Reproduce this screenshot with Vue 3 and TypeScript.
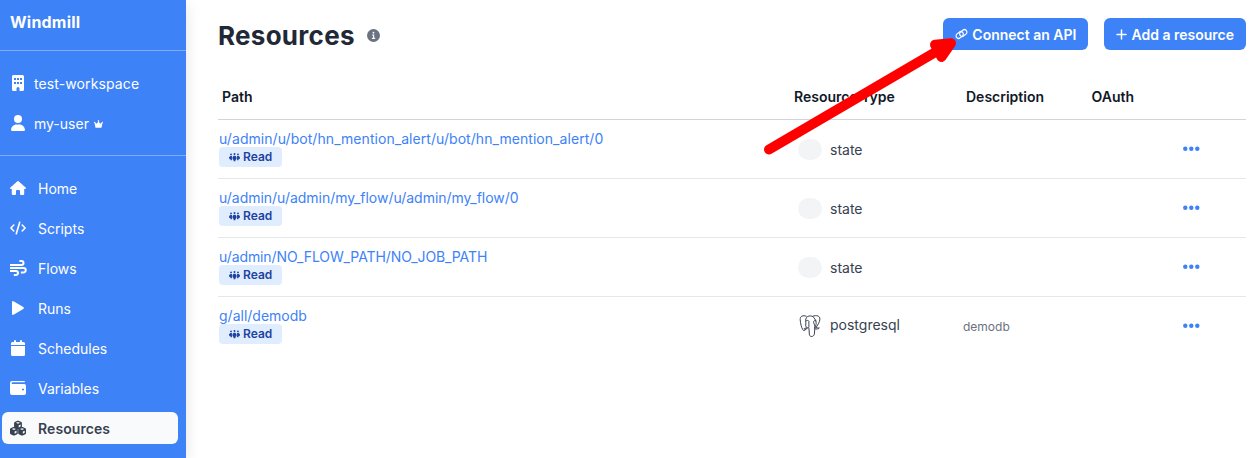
<script setup lang="ts">
interface NavItem {
  label: string
  icon: string
  active?: boolean
}

interface Resource {
  path: string
  type: string
  description: string
  tracking: number
}

const navItems: NavItem[] = [
  { label: 'Home', icon: 'home' },
  { label: 'Scripts', icon: 'code' },
  { label: 'Flows', icon: 'wind' },
  { label: 'Runs', icon: 'play' },
  { label: 'Schedules', icon: 'calendar' },
  { label: 'Variables', icon: 'wallet' },
  { label: 'Resources', icon: 'cubes', active: true },
]

const resources: Resource[] = [
  { path: 'u/admin/u/bot/hn_mention_alert/u/bot/hn_mention_alert/0', type: 'state', description: '', tracking: 0.055 },
  { path: 'u/admin/u/admin/my_flow/u/admin/my_flow/0', type: 'state', description: '', tracking: -0.02 },
  { path: 'u/admin/NO_FLOW_PATH/NO_JOB_PATH', type: 'state', description: '', tracking: -0.1 },
  { path: 'g/all/demodb', type: 'postgresql', description: 'demodb', tracking: 0 },
]
</script>

<template>
  <div class="app">
    <aside class="sidebar">
      <div class="brand">Windmill</div>
      <div class="account">
        <div class="account-row">
          <svg class="icon" viewBox="0 0 16 16">
            <path fill="currentColor" fill-rule="evenodd" d="M3.5 0h9A1.5 1.5 0 0 1 14 1.5v13a1.5 1.5 0 0 1-1.500 1.500H9.500v-2.500a1.500 1.500 0 0 0-3 0V16h-3A1.500 1.500 0 0 1 2 14.500v-13A1.500 1.500 0 0 1 3.500 0zM4 3v2h2V3zm3 0v2h2V3zm3 0v2h2V3zM4 7v2h2V7zm3 0v2h2V7zm3 0v2h2V7z" />
          </svg>
          <span class="workspace">test-workspace</span>
        </div>
        <div class="account-row">
          <svg class="icon" viewBox="-32 0 512 512">
            <path fill="currentColor" d="M224 256A128 128 0 1 0 224 0a128 128 0 1 0 0 256zm-45.700 48C79.800 304 0 383.800 0 482.300C0 498.700 13.300 512 29.700 512H418.300c16.400 0 29.700-13.300 29.700-29.700C448 383.800 368.200 304 269.700 304H178.300z" />
          </svg>
          <span class="user">my-user</span>
          <svg class="crown" viewBox="0 0 10 9">
            <path fill="currentColor" d="M1.600 8.300.5 3.300a.7.700 0 1 1 .8-.5l1.900 1.300L4.600 1.700a.8.800 0 1 1 .8 0l1.400 2.400 1.900-1.300a.7.700 0 1 1 .8.500l-1.100 5q-.1.500-.6.500H2.200q-.5 0-.6-.5z" />
          </svg>
        </div>
      </div>
      <nav class="nav">
        <a v-for="item in navItems" :key="item.label" class="nav-item" :class="{ active: item.active }">
          <svg class="icon" viewBox="0 0 16 16">
            <path v-if="item.icon === 'home'" fill="currentColor" d="M7.400 1.300a.95.950 0 0 1 1.200 0l7 6.200c.7.600.3 1.400-.5 1.400h-.9V14a1 1 0 0 1-1 1H11a1 1 0 0 1-1-1v-3a1 1 0 0 0-1-1H7a1 1 0 0 0-1 1v3a1 1 0 0 1-1 1H2.800a1 1 0 0 1-1-1V8.900H.9C.1 8.900-.3 8.100.4 7.500z" />
            <path v-else-if="item.icon === 'code'" fill="none" stroke="currentColor" stroke-width="1.600" stroke-linecap="round" stroke-linejoin="round" d="M3.800 5 .9 8l2.900 3M12.200 5l2.900 3-2.900 3M9.700 2.300 6.300 13.700" />
            <path v-else-if="item.icon === 'wind'" fill="none" stroke="currentColor" stroke-width="2" stroke-linecap="square" d="M1 5h10.500a2 2 0 1 0 0-4H10.400M1 8h12.500a1.700 1.700 0 1 1 0 4.500H11.800M1 11h5a1.950 1.950 0 1 1 0 4H4.800" />
            <path v-else-if="item.icon === 'play'" fill="currentColor" d="M3.500 1.200 13.300 7a1.150 1.150 0 0 1 0 2l-9.800 5.800A1 1 0 0 1 2 13.900V2.100a1 1 0 0 1 1.500-.9z" />
            <path v-else-if="item.icon === 'calendar'" fill="currentColor" d="M4 1a1 1 0 0 1 2 0v1h4V1a1 1 0 0 1 2 0v1h1.500A1.500 1.500 0 0 1 15 3.500V5H1V3.500A1.500 1.500 0 0 1 2.500 2H4zM1 6h14v8.500a1.500 1.500 0 0 1-1.500 1.500h-11A1.500 1.500 0 0 1 1 14.500z" />
            <path v-else-if="item.icon === 'wallet'" fill="currentColor" fill-rule="evenodd" d="M2 1h12a1 1 0 0 1 1 1v.3H2.500a.6.600 0 0 0 0 1.700H14.200A1.800 1.800 0 0 1 16 5.800v7.400a1.800 1.800 0 0 1-1.800 1.800H2a2 2 0 0 1-2-2V3a2 2 0 0 1 2-2zM13 8.500a1 1 0 1 0 0 2 1 1 0 0 0 0-2z" />
            <g v-else>
              <g v-for="(pos, i) in ['translate(4.100 .7)', 'translate(0 7)', 'translate(8.200 7)']" :key="i" :transform="pos">
                <path fill="currentColor" d="M3.300.1q.6-.25 1.200 0L7.200 1.200q.6.300.6 1v4q0 .7-.6 1L4.500 8.400q-.6.300-1.200 0L.6 7.200q-.6-.3-.6-1v-4q0-.7.600-1z" />
                <path fill="#f9fafb" d="M3.900 1.200 6 2.100 3.900 3 1.800 2.100zM4.600 4.500 6.500 3.700v2L4.600 6.700z" />
              </g>
            </g>
          </svg>
          <span class="nav-label">{{ item.label }}</span>
        </a>
      </nav>
    </aside>

    <main class="content">
      <header class="page-header">
        <h1>Resources</h1>
        <svg class="info" viewBox="0 0 13 13">
          <circle cx="6.500" cy="6.500" r="6.500" fill="#6b7280" />
          <circle cx="6.500" cy="3.700" r=".9" fill="#fff" />
          <path fill="none" stroke="#fff" stroke-width="1.200" d="M5.100 6H6.600V9.300M4.900 9.300H8.200" />
        </svg>
        <div class="actions">
          <button class="btn">
            <svg class="link-icon" viewBox="0 0 13 12">
              <g fill="none" stroke="currentColor" stroke-width="1.200" stroke-linecap="round">
                <rect x="-3.900" y="-2.500" width="7.800" height="5" rx="2.500" transform="translate(4.700 7) rotate(-38)" />
                <rect x="-3.900" y="-2.500" width="7.800" height="5" rx="2.500" transform="translate(8.300 5) rotate(-38)" />
              </g>
            </svg>
            <span>Connect an API</span>
          </button>
          <button class="btn">
            <svg class="plus-icon" viewBox="0 0 11 11">
              <path fill="none" stroke="currentColor" stroke-width="1.500" stroke-linecap="round" d="M5.500 1v9M1 5.500h9" />
            </svg>
            <span>Add a resource</span>
          </button>
        </div>
      </header>

      <section class="table">
        <div class="row head">
          <span class="head-path">Path</span>
          <span>Resource Type</span>
          <span>Description</span>
          <span class="head-oauth">OAuth</span>
          <span></span>
        </div>
        <div v-for="resource in resources" :key="resource.path" class="row body">
          <div class="path-cell">
            <a class="path" :style="{ letterSpacing: resource.tracking + 'px' }">{{ resource.path }}</a>
            <span class="badge">
              <svg class="group-icon" viewBox="0 0 12 10">
                <g fill="currentColor">
                  <circle cx="2.200" cy="2.200" r="1" />
                  <circle cx="6" cy="1.700" r="1.100" />
                  <circle cx="9.800" cy="2.200" r="1" />
                  <path d="M1.600 3.800h1.600v4.700H1.800V7.800Q0 7.400 0 5.800T1.600 3.800zM10.400 3.800H8.800v4.700h1.400V7.800Q12 7.400 12 5.800T10.400 3.800zM5.200 3.500h1.600Q8.300 4.200 8.300 6T7 8.300V9.500H5V8.300Q3.700 7.800 3.700 6T5.200 3.500z" />
                </g>
              </svg>
              <span>Read</span>
            </span>
          </div>
          <div class="type-cell" :class="{ postgres: resource.type === 'postgresql' }">
            <svg v-if="resource.type === 'postgresql'" class="type-icon" viewBox="0 0 24 24">
              <g fill="none" stroke="#374151" stroke-width="1" stroke-linecap="round" stroke-linejoin="round">
                <path d="M8.200 2.200C5 1 2 2 2.200 5.700c.2 3.500 1.200 7.800 2.600 10.100 1 1.500 2.300.9 3.200-.6" />
                <path d="M9.400 13.800C7.600 13.200 7.500 11.500 7.800 10 8.100 7.500 7 5.500 8.500 3.500c1.600-2.100 5.600-2.100 7.300 0 1.600 1.900 2.700 4.200 2.300 6.800-.2 1.400-.9 2.500-1.600 3.500" />
                <path d="M10.900 13.900c.5 2.100.1 4.200.4 6.300.2 1.900 1.500 2.700 3 2.200 1.600-.5 2.100-1.700 2.200-3.300l.3-5.200" />
                <path d="M14.900 2.200c3.900-1.400 7.100-.2 7 2.900-.1 2.800-2.200 6.400-4.100 8.600M17 14.800c1.400.5 3.400.3 4.300-.9-1.300.1-2.700.2-3.500-.8M9.500 13.900c-.8 1.300-2.600 1.500-3.600.9 1-.1 1.800-.5 2.300-1.200" />
                <path d="M7.700 7c1.300-1 2.900-.8 3.200.4.300 1.700-.4 3.300 0 4.700.2.900-.5 1.500-1 1.800M18 6.700c-1.500-.5-2.600.1-2.400 1.500.1 1.300 1.200 2.300 1.200 4.200" />
              </g>
            </svg>
            <span v-else class="type-blank"></span>
            <span class="type-name">{{ resource.type }}</span>
          </div>
          <span class="description">{{ resource.description }}</span>
          <span></span>
          <svg class="dots" viewBox="0 0 18 6">
            <g fill="#3d82f7">
              <circle cx="3.300" cy="2.700" r="2.200" />
              <circle cx="9.300" cy="2.700" r="2.200" />
              <circle cx="15.300" cy="2.700" r="2.200" />
            </g>
          </svg>
        </div>
      </section>
    </main>

    <svg class="arrow" viewBox="0 0 200 130">
      <g fill="red" stroke="red" stroke-width="10" stroke-linecap="round" stroke-linejoin="round">
        <path d="M9 119.500 185 16.500" />
        <path d="M175 14.700 191 13.200 181.500 27z" />
      </g>
    </svg>
  </div>
</template>

<style>
body {
  margin: 0;
  background: #fff;
  overflow: hidden;
}
</style>

<style scoped>
.app {
  position: relative;
  display: flex;
  height: 458px;
  overflow: hidden;
  font-family: Inter, "Liberation Sans", sans-serif;
  font-size: 14px;
  line-height: 20px;
  color: #374151;
}

.app svg {
  display: block;
  flex: none;
}

.sidebar {
  flex: none;
  width: 186px;
  background: #3d82f7;
  color: #fff;
  box-shadow: 0 4px 14px rgba(0, 0, 0, 0.11);
}

.brand {
  box-sizing: border-box;
  height: 51px;
  padding: 10px 10px 0;
  border-bottom: 1px solid #7eacf9;
  font-size: 16px;
  font-weight: 700;
  line-height: 24px;
  letter-spacing: 0.22px;
}

.account {
  display: flex;
  flex-direction: column;
  gap: 8px;
  box-sizing: border-box;
  height: 105px;
  padding: 17px 10px 0;
  border-bottom: 1px solid #7eacf9;
}

.account-row {
  display: flex;
  align-items: center;
  height: 32px;
}

.icon {
  width: 16px;
  height: 16px;
  overflow: visible;
}

.account-row .icon {
  margin-top: -2px;
}

.workspace,
.user {
  margin-left: 8px;
}

.workspace {
  letter-spacing: 0.11px;
}

.crown {
  width: 9px;
  height: 8px;
  margin-left: 5px;
}

.nav {
  display: flex;
  flex-direction: column;
  gap: 8px;
  padding: 16px 8px 0 2px;
}

.nav-item {
  display: flex;
  align-items: center;
  gap: 12px;
  height: 32px;
  padding-left: 8px;
  border-radius: 6px;
}

.nav-label {
  padding-top: 2px;
}

.nav-item .icon {
  margin-top: -1px;
}

.active {
  background: #f9fafb;
  color: #374151;
  font-weight: 600;
  letter-spacing: 0.08px;
}

.content {
  flex: 1;
  padding: 18px 14px 0 32px;
}

.page-header {
  display: flex;
  align-items: center;
  height: 32px;
}

h1 {
  margin: 3px 0 0;
  font-size: 26px;
  line-height: 32px;
  font-weight: 700;
  letter-spacing: 0.28px;
  color: #1f2937;
}

.info {
  width: 13px;
  height: 13px;
  margin: 2px 0 0 12px;
}

.actions {
  display: flex;
  gap: 16px;
  margin-left: auto;
}

.btn {
  display: flex;
  align-items: center;
  height: 32px;
  padding: 0 12px;
  border: 0;
  border-radius: 6px;
  background: #3d82f7;
  color: #fff;
  font: 600 14px/20px Inter, "Liberation Sans", sans-serif;
}

.btn span {
  padding-top: 2px;
}

.link-icon {
  width: 13px;
  height: 12px;
  margin-right: 4px;
}

.plus-icon {
  width: 11px;
  height: 11px;
  margin-right: 4px;
}

.table {
  margin-top: 24px;
}

.row {
  display: grid;
  grid-template-columns: 576px 172px 125px 91px 1fr;
  box-sizing: border-box;
}

.head {
  height: 46px;
  padding-top: 13px;
  border-bottom: 1px solid #d1d5db;
  color: #111827;
  font-weight: 600;
}

.head-path {
  padding-left: 4px;
}

.head-oauth {
  padding-left: 0.5px;
}

.body {
  height: 59px;
  border-bottom: 1px solid #e5e7eb;
}

.body:last-child {
  border-bottom: 0;
}

.path-cell {
  display: flex;
  flex-direction: column;
  align-items: flex-start;
  padding: 9px 0 0 1px;
}

.path {
  height: 18px;
  color: #3d82f7;
}

.badge {
  display: flex;
  align-items: center;
  gap: 3px;
  height: 20px;
  padding: 0 10px;
  border-radius: 4px;
  background: #e0edff;
  color: #1e429f;
  font-size: 12px;
  font-weight: 600;
}

.group-icon {
  width: 11px;
  height: 10px;
}

.type-cell {
  display: flex;
  align-items: center;
  gap: 8px;
  height: 60px;
  padding-left: 4px;
}

.postgres {
  height: 58px;
}

.postgres .type-name {
  margin-top: -2px;
}

.type-blank {
  width: 24px;
  height: 21px;
  margin-top: -1px;
  border-radius: 12px;
  background: #f3f4f6;
}

.type-icon {
  width: 24px;
  height: 24px;
}

.description {
  padding-top: 20px;
  margin-left: -3px;
  font-size: 12px;
  color: #6b7280;
}

.dots {
  width: 18px;
  height: 6px;
  margin-top: 26px;
}

.arrow {
  position: absolute;
  top: 30px;
  left: 760px;
  width: 200px;
  height: 130px;
}
</style>
